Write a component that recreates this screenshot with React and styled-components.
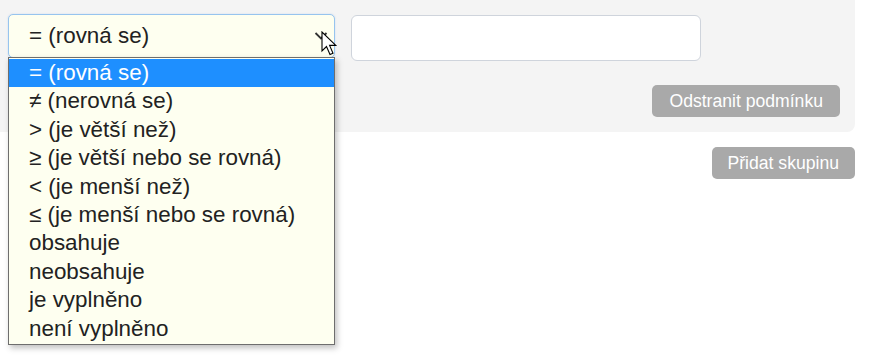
import React from "react";
import styled, { createGlobalStyle } from "styled-components";

const Global = createGlobalStyle`
  html, body { margin: 0; padding: 0; background: #ffffff; }
  body { font-family: "Liberation Sans", Arial, sans-serif; }
`;

const Page = styled.div`
  width: 871px;
  height: 358px;
  position: relative;
  overflow: hidden;
`;

const Panel = styled.div`
  width: 855px;
  height: 132px;
  box-sizing: border-box;
  background: #f4f4f4;
  border-bottom-right-radius: 8px;
  padding: 14px 15px 0 8px;
  display: flex;
  flex-direction: column;
`;

const ConditionRow = styled.div`
  display: flex;
  align-items: flex-start;
  gap: 16px;
`;

const SelectWrap = styled.div`
  position: relative;
  width: 327px;
`;

const SelectBox = styled.div`
  box-sizing: border-box;
  width: 327px;
  height: 44px;
  background: #fefff0;
  border: 1px solid #97c4ee;
  border-radius: 5px;
  box-shadow: 0 0 2px rgba(120, 170, 230, 0.35);
  display: flex;
  align-items: center;
  padding: 0 0 0 20px;
  font-size: 22.4px;
  color: #222;
  position: relative;
`;

const Chevron = styled.svg`
  position: absolute;
  right: 6px;
  top: 16px;
`;

const OptionList = styled.ul`
  position: absolute;
  left: 0;
  top: 43px;
  width: 327px;
  box-sizing: border-box;
  margin: 0;
  padding: 1px 0 1px;
  list-style: none;
  background: #fefff0;
  border: 1px solid #6e6e6e;
  box-shadow: 2px 3px 6px rgba(0, 0, 0, 0.25);
  z-index: 5;
`;

const Option = styled.li`
  height: 28.4px;
  line-height: 28.4px;
  padding-left: 20px;
  font-size: 22.4px;
  color: ${(p) => (p.$active ? "#ffffff" : "#222222")};
  background: ${(p) => (p.$active ? "#1e8fff" : "transparent")};
  white-space: nowrap;
`;

const ValueInput = styled.div`
  box-sizing: border-box;
  width: 350px;
  height: 46px;
  margin-top: 1px;
  background: #ffffff;
  border: 1px solid #cfd4dc;
  border-radius: 6px;
`;

const ActionRow = styled.div`
  display: flex;
  justify-content: flex-end;
  margin-top: 24px;
`;

const GreyButton = styled.div`
  box-sizing: border-box;
  height: 32px;
  display: inline-flex;
  align-items: center;
  justify-content: center;
  padding: 0 ${(p) => p.$pad}px;
  background: #a9a9a9;
  color: #ffffff;
  border-radius: 5px;
  font-size: 17.6px;
  white-space: nowrap;
`;

const GroupRow = styled.div`
  width: 855px;
  display: flex;
  justify-content: flex-end;
  margin-top: 15px;
`;

const Cursor = styled.svg`
  position: absolute;
  left: 321px;
  top: 31px;
  z-index: 10;
`;

const options = [
  "= (rovná se)",
  "≠ (nerovná se)",
  "> (je větší než)",
  "≥ (je větší nebo se rovná)",
  "< (je menší než)",
  "≤ (je menší nebo se rovná)",
  "obsahuje",
  "neobsahuje",
  "je vyplněno",
  "není vyplněno",
];

export default function App() {
  return (
    <Page>
      <Global />
      <Panel>
        <ConditionRow>
          <SelectWrap>
            <SelectBox>
              = (rovná se)
              <Chevron width="14" height="10" viewBox="0 0 14 10">
                <path d="M1.5 2 L7 7.5 L12.5 2" fill="none" stroke="#333" strokeWidth="1.8" />
              </Chevron>
            </SelectBox>
            <OptionList>
              {options.map((o, i) => (
                <Option key={o} $active={i === 0}>
                  {o}
                </Option>
              ))}
            </OptionList>
          </SelectWrap>
          <ValueInput />
        </ConditionRow>
        <ActionRow>
          <GreyButton $pad={17}>Odstranit podmínku</GreyButton>
        </ActionRow>
      </Panel>
      <GroupRow>
        <GreyButton $pad={16}>Přidat skupinu</GreyButton>
      </GroupRow>
      <Cursor width="20" height="28" viewBox="0 0 20 28">
        <path
          d="M1 1 L1 20 L5.5 15.5 L9 23.5 L12 22.2 L8.6 14.4 L14.8 14.4 Z"
          fill="#ffffff"
          stroke="#000000"
          strokeWidth="1.1"
          strokeLinejoin="miter"
        />
      </Cursor>
    </Page>
  );
}
